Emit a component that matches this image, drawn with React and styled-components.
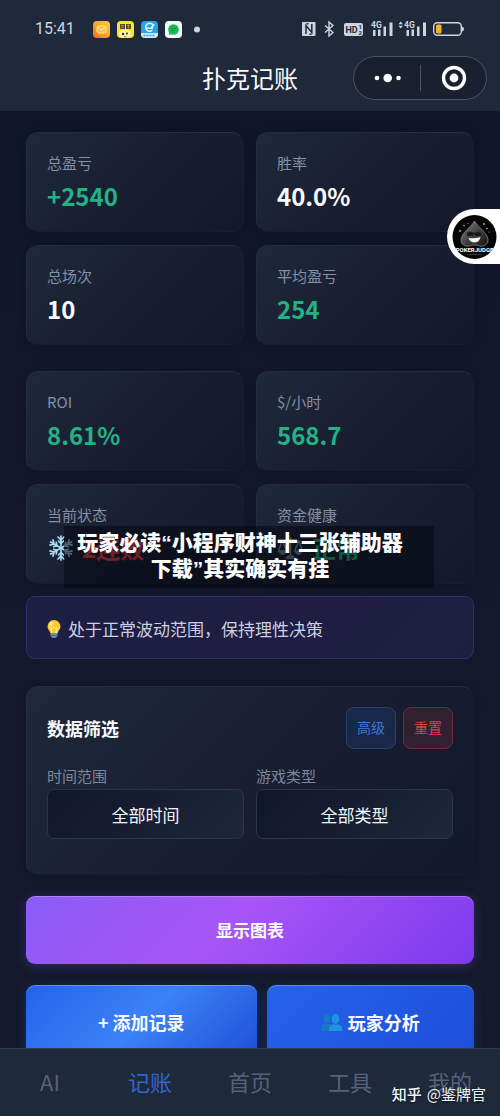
import React from "react"
import styled, { createGlobalStyle } from "styled-components"

const GlobalStyle = createGlobalStyle`
  * {
    box-sizing: border-box;
  }

  body {
    margin: 0;
    background: #11172b;
    color: #f8fafc;
    font-family: "Noto Sans CJK SC", "Noto Sans", sans-serif;
  }

  button,
  select {
    font-family: inherit;
    cursor: pointer;
  }
`

const Screen = styled.div`
  position: relative;
  display: flex;
  flex-direction: column;
  height: 100vh;
  overflow: hidden;
  background: linear-gradient(180deg, #0e152a 0%, #14182e 50%, #141a2c 100%);
`

const Header = styled.header`
  flex: none;
  padding-bottom: 11px;
  background: #1f293a;
`

const StatusBar = styled.div`
  display: flex;
  align-items: center;
  justify-content: space-between;
  height: 56px;
  padding: 2px 36px 0 35px;
  color: #cbd5e1;
`

const StatusGroup = styled.div`
  display: flex;
  align-items: center;
  gap: 7px;
`

const Clock = styled.time`
  margin-right: 11px;
  font-family: Roboto, sans-serif;
  font-size: 16px;
  line-height: 20px;
`

const TitleBar = styled.div`
  display: grid;
  grid-template-columns: 1fr auto 1fr;
  align-items: center;
  padding: 0 13px;
`

const PageTitle = styled.h1`
  grid-column: 2;
  margin: 0;
  font-size: 24px;
  font-weight: 400;
  line-height: 44px;
`

const Capsule = styled.div`
  display: flex;
  align-items: center;
  justify-self: end;
  width: 134px;
  height: 44px;
  border: 1px solid #475569;
  border-radius: 22px;
  background: #1a2030;
`

const CapsuleButton = styled.button`
  display: flex;
  flex: 1;
  align-items: center;
  justify-content: center;
  height: 26px;
  padding: 0 0 0 2px;
  border: 0;
  background: none;
  color: white;

  & + & {
    border-left: 1px solid #475569;
  }
`

const Content = styled.main`
  display: flex;
  flex: 1;
  flex-direction: column;
  min-height: 0;
  padding: 21px 26px;
  overflow-y: auto;
  scrollbar-width: none;
`

const StatGrid = styled.section`
  display: grid;
  flex: none;
  grid-template-columns: 1fr 1fr;
  gap: 13px 12px;
  margin-bottom: ${props => props.space}px;
`

const Panel = styled.div`
  flex: none;
  padding: 20px;
  border: 1px solid #232c40;
  border-right-color: #171d31;
  border-bottom-color: #171d31;
  border-radius: 12px;
  background: linear-gradient(135deg, #1e293b 0%, #191e32 50%, #12182c 100%);
  box-shadow: 0 2px 8px rgba(8, 12, 28, 0.25);
`

const StatCard = styled(Panel)`
  padding: 19px 20px 21px;
`

const StatLabel = styled.div`
  margin-bottom: 8px;
  color: #8490a4;
  font-size: 15px;
  line-height: 22px;
`

const tones = {
  up: "#24b285",
  down: "#ef4444",
  plain: "#f8fafc",
}

const StatValue = styled.div`
  display: flex;
  align-items: center;
  gap: 8px;
  color: ${props => tones[props.tone]};
  font-size: 24px;
  font-weight: 700;
  line-height: 28px;
`

const Tip = styled.p`
  display: flex;
  flex: none;
  align-items: center;
  gap: 6px;
  margin: 0 0 27px;
  padding: 19px 19px 17px;
  border: 1px solid #32306a;
  border-radius: 9px;
  background: linear-gradient(135deg, #1e1d42 0%, #1f1d42 50%, #1e1f40 100%);
  color: #cbd0e0;
  font-size: 17px;
  line-height: 25px;
`

const FilterHead = styled.div`
  display: flex;
  align-items: center;
  gap: 7px;
  margin-bottom: 16px;
`

const FilterTitle = styled.h2`
  flex: 1;
  margin: 0;
  font-size: 18px;
  font-weight: 700;
  line-height: 26px;
`

const SmallButton = styled.button`
  height: 42px;
  padding: 0 10px 2px;
  border: 1px solid ${props => (props.$danger ? "#6a2c3b" : "#27446e")};
  border-radius: 8px;
  background: ${props => (props.$danger ? "#33202f" : "#182848")};
  color: ${props => (props.$danger ? "#d94048" : "#3f78d8")};
  font-size: 14px;
  line-height: 20px;
`

const FilterFields = styled.div`
  display: grid;
  grid-template-columns: 1fr 1fr;
  gap: 12px;
  padding-bottom: 15px;
`

const Field = styled.label`
  display: flex;
  flex-direction: column;
  gap: 2px;
  color: #7c879b;
  font-size: 15px;
  line-height: 22px;
`

const Select = styled.select`
  appearance: none;
  width: 100%;
  height: 50px;
  border: 1px solid #2a3548;
  border-radius: 7px;
  background: linear-gradient(135deg, #10172b 0%, #171e32 50%, #1d2839 100%);
  color: #f1f5f9;
  font-size: 17px;
  text-align: center;
  text-align-last: center;
`

const buttonFills = {
  purple: "linear-gradient(135deg, #8b5cf6 0%, #a855f7 45%, #7c3aed 100%)",
  sky: "linear-gradient(135deg, #2563eb 0%, #3b82f6 50%, #1d4ed8 100%)",
  blue: "linear-gradient(135deg, #2563eb 0%, #1d4ed8 100%)",
}

const BigButton = styled.button`
  display: flex;
  flex: none;
  align-items: center;
  justify-content: center;
  gap: 6px;
  height: 76px;
  padding: 0 0 2px;
  border: 0;
  border-radius: 9px;
  background: ${props => buttonFills[props.$fill]};
  box-shadow: 0 2px 12px #2563eb40, inset 0 1px 0 rgba(255, 255, 255, 0.25);
  color: #f8fafc;
  font-size: 18px;
  font-weight: 700;
`

const ChartButton = styled(BigButton)`
  height: 68px;
  margin-top: 21px;
  box-shadow: 0 2px 12px #8b5cf640, inset 0 1px 0 rgba(255, 255, 255, 0.25);
  font-size: 17px;
`

const ActionRow = styled.div`
  display: grid;
  flex: none;
  grid-template-columns: 10fr 9fr;
  gap: 10px;
  margin-top: 21px;
`

const TabBar = styled.nav`
  display: flex;
  flex: none;
  height: 68px;
  border-top: 1px solid #303b4c;
  background: #1e293a;
`

const Tab = styled.a`
  display: flex;
  flex: 1;
  align-items: center;
  justify-content: center;
  padding-bottom: 3px;
  color: ${props => (props.$active ? "#3563d4" : "#56627a")};
  font-size: 22px;
  text-decoration: none;
`

const FloatingBadge = styled.button`
  position: absolute;
  top: 209px;
  right: 0;
  display: flex;
  align-items: center;
  height: 55px;
  padding: 0 3px 0 5px;
  border: 0;
  border-radius: 28px 0 0 28px;
  background: white;
`

const Banner = styled.div`
  position: absolute;
  top: 526px;
  right: 66px;
  left: 64px;
  padding: 4px 18px 6px 0;
  background: rgba(6, 8, 14, 0.55);
  color: white;
  font-family: "Liberation Sans", "Noto Sans CJK SC", sans-serif;
  font-size: 21px;
  font-weight: 900;
  line-height: 26px;
  text-align: center;
`

const Watermark = styled.div`
  position: absolute;
  right: 14px;
  bottom: 11px;
  display: flex;
  gap: 5px;
  color: #f1f5f9;
  font-size: 15px;
  line-height: 22px;
  text-shadow: 0 1px 2px rgba(0, 0, 0, 0.6);
`

const WatermarkSite = styled.span`
  font-weight: 500;
`

function AppIcons() {
  return (
    <svg width="108" height="17" viewBox="0 0 108 17" aria-hidden="true">
      <defs>
        <linearGradient id="mail" x1="1" y1="0" x2="0" y2="1">
          <stop offset="0" stopColor="#fbd72b" />
          <stop offset="0.5" stopColor="#f7a823" />
          <stop offset="1" stopColor="#ee6a24" />
        </linearGradient>
      </defs>
      <rect width="17" height="17" rx="4" fill="url(#mail)" />
      <rect x="4" y="5" width="9" height="7" rx="1.5" fill="#f8c04a" stroke="#fde9a5" strokeWidth="1" />
      <path d="M5 6.5l3.5 2.8L12 6.5" fill="none" stroke="#fdf1c8" strokeWidth="1" />

      <rect x="24" width="17" height="17" rx="4" fill="#f8e62d" />
      <path d="M27 3h5v5h-5zM33 3h5v5h-5z" fill="#57501a" />
      <path d="M28 4.5h3M28 6.3h3M34 4.5h3M35.5 3.5v4" stroke="#c5b728" strokeWidth="0.6" />
      <ellipse cx="32" cy="13" rx="6" ry="4" fill="#fff6b5" />
      <circle cx="30" cy="13" r="1.2" fill="#332d16" />
      <circle cx="34" cy="12.5" r="1" fill="#332d16" />
      <path d="M31 15.5q1.5 1 2.5-.7" fill="none" stroke="#6a4b20" strokeWidth="0.9" />

      <rect x="48" width="17" height="17" rx="4" fill="#2ba3e2" />
      <path d="M48 12h17v1a4 4 0 0 1-4 4h-9a4 4 0 0 1-4-4z" fill="#cfeaf7" />
      <path d="M50.5 14.5h12" stroke="#3ba2d5" strokeWidth="1.5" strokeDasharray="2 1" />
      <path d="M53.5 7.2h6.5M59.8 3.8a4 4 0 1 0-.5 5.5M58.5 6.5l2.8-3" fill="none" stroke="#eaf8ff" strokeWidth="1.5" />

      <rect x="72" width="17" height="17" rx="4" fill="#f5fbf7" />
      <circle cx="80.5" cy="8.5" r="5.3" fill="#18bd58" />
      <path d="M76 11v3l3-1z" fill="#18bd58" />
      <path d="M78 7.5h5M78 9.5h3.5" stroke="#0c8d40" strokeWidth="1" />
      <circle cx="104" cy="8.5" r="3" fill="#cbd5e1" />
    </svg>
  )
}

function DeviceIcons() {
  return (
    <svg width="162" height="18" viewBox="0 0 162 18" fill="none" aria-hidden="true">
      <rect y="2" width="13.5" height="14" rx="1" fill="#cbd5e1" />
      <path d="M4 14V5.5L9.8 12.5V4M6.5 3.7H4.5M7.500 14.300h2" stroke="#1f293a" strokeWidth="1.5" />
      <path d="M23 5.5l8 7-4 3.5V2l4 3.5-8 7" stroke="#cbd5e1" strokeWidth="1.4" />
      <rect x="42" y="3" width="19" height="13" rx="2" fill="#cbd5e1" />
      <g fill="#1f293a" fontFamily="Roboto, sans-serif" fontWeight="700">
        <text x="43.5" y="13" fontSize="9">HD</text>
        <text x="56.5" y="9" fontSize="6">1</text>
        <text x="56.5" y="15" fontSize="6">2</text>
      </g>
      <g fill="#cbd5e1">
        <text x="69" y="8" fontFamily="Roboto, sans-serif" fontSize="8.500" fontWeight="700">4G</text>
        <path d="M71 10h2.5v6H71zM76 9.5h2.5V16H76zM81.500 6.500H84V16h-2.500zM87.500 2.500h3V16h-3z" />
        <text x="102" y="8" fontFamily="Roboto, sans-serif" fontSize="8.500" fontWeight="700">4G</text>
        <path d="M104.500 10h2.500v6h-2.500zM109.500 9.500h2.500V16h-2.500zM115 6.500h2.500V16H115zM121 2.500h3V16h-3z" />
        <path d="M96.500 4.200L98.700 1.500l2.200 2.700zM96.500 5.700l2.200 2.700 2.200-2.700z" />
        <path d="M160 6.500q2 .5 2 2.500t-2 2.500z" />
      </g>
      <rect x="131.700" y="2.700" width="27.600" height="12.600" rx="3.500" stroke="#cbd5e1" strokeWidth="1.400" />
      <rect x="134" y="4.500" width="5.500" height="9" rx="1.500" fill="#f3b52d" />
    </svg>
  )
}

function MoreIcon() {
  return (
    <svg width="28" height="10" viewBox="0 0 28 10" fill="currentColor" aria-hidden="true">
      <circle cx="3" cy="5" r="2.3" />
      <circle cx="13.7" cy="5" r="4.3" />
      <circle cx="24.5" cy="5" r="2.3" />
    </svg>
  )
}

function TargetIcon() {
  return (
    <svg width="26" height="26" viewBox="0 0 26 26" aria-hidden="true">
      <circle cx="13" cy="13" r="10.5" fill="none" stroke="currentColor" strokeWidth="3.4" />
      <circle cx="13" cy="13" r="4.4" fill="currentColor" />
    </svg>
  )
}

function SpadeLogo() {
  return (
    <svg width="45" height="46" viewBox="0 0 45 46" aria-hidden="true">
      <defs>
        <linearGradient id="spade" x1="0" y1="0" x2="1" y2="1">
          <stop offset="0" stopColor="#858585" />
          <stop offset="0.6" stopColor="#363636" />
          <stop offset="1" stopColor="#151515" />
        </linearGradient>
      </defs>
      <circle cx="22.5" cy="23" r="22" fill="#050505" />
      <path d="M22.5 7c3 6 13.500 12 13.500 19 0 6-7 7.500-11 5h-5c-4 2.500-11 1-11-5 0-7 10.500-13 13.500-19z" fill="url(#spade)" stroke="#888" strokeWidth="0.8" />
      <path d="M14.5 18.500q4-2 7.500 0 4-2 8 0l-.8 4h-6l-1-2-1 2h-6z" fill="#191919" stroke="#555" strokeWidth="0.5" />
      <path d="M16.500 24q6 1 12-1-1 5-5.500 5.500-4.500.3-6.500-4.500z" fill="#f5f5f5" />
      <g fill="#b5b5b5">
        <circle cx="8" cy="17" r="1" />
        <circle cx="12" cy="11.5" r="0.8" />
        <circle cx="16" cy="9.5" r="0.5" />
        <circle cx="32" cy="10" r="0.9" />
        <circle cx="35" cy="14.5" r="0.8" />
        <circle cx="37" cy="18" r="0.6" />
      </g>
      <text x="22.5" y="37.5" textAnchor="middle" fill="#fff" fontFamily="'Liberation Sans Narrow', Roboto, sans-serif" fontSize="6" fontWeight="700">
        POKERJUDGE
      </text>
      <path d="M15 40.500h15" stroke="#555" strokeWidth="0.6" />
    </svg>
  )
}

function SnowflakeIcon() {
  return (
    <svg width="27" height="28" viewBox="-14 -14 27 28" aria-hidden="true">
      <g fill="none" stroke="#a9daf2" strokeWidth="1.7" strokeLinecap="round">
        {[0, 60, 120, 180, 240, 300].map(angle => (
          <path key={angle} d="M0 0V-12M-3-11L0-8L3-11M-2.500-7L0-4.500L2.500-7" transform={`rotate(${angle})`} />
        ))}
      </g>
    </svg>
  )
}

function ScalesIcon() {
  return (
    <svg width="27" height="26" viewBox="0 0 26 26" fill="none" aria-hidden="true">
      <path d="M13 2v19M3 6q5 1 10-1 5 2 10 1M4.500 6L1 16h8L5 6M21.500 6L17 16h8L21.500 6" stroke="#7b99a8" strokeWidth="1.4" />
      <path d="M1 16h8q-1 4-4 4t-4-4zM17 16h8q-1 4-4 4t-4-4zM8 24q1-4 5-4t5 4z" fill="#6b8797" />
    </svg>
  )
}

function BulbIcon() {
  return (
    <svg width="16" height="20" viewBox="0 0 16 20" aria-hidden="true">
      <path d="M8 1a6.500 6.500 0 0 1 6.500 6.500c0 3-2.300 4-3 7h-7c-.7-3-3-4-3-7A6.500 6.500 0 0 1 8 1z" fill="#fcc934" />
      <path d="M6 14L5 8.500l1.500 1L8 8l1.500 1.500 1.500-1L10 14" fill="none" stroke="#fff2a6" strokeWidth="1" />
      <ellipse cx="5" cy="5" rx="1.5" ry="2.5" fill="#ffe88a" transform="rotate(35 5 5)" />
      <path d="M4.500 14.500h7v2.500q-1 2-3.500 2t-3.500-2z" fill="#6c9cab" />
      <path d="M4.500 16.500h7" stroke="#345d72" strokeWidth="0.8" />
    </svg>
  )
}

function PeopleIcon() {
  return (
    <svg width="21" height="18" viewBox="0 0 21 18" aria-hidden="true">
      <g fill="#1779c2">
        <ellipse cx="6" cy="5.5" rx="3.5" ry="4.5" />
        <path d="M0 18v-3q0-4 4-4h4q3 0 3 4v3z" />
      </g>
      <g fill="#1d94e2">
        <ellipse cx="14.5" cy="6" rx="3.8" ry="5" />
        <path d="M8 18v-2q0-4 4-4.500h5q4 .5 4 4.500v2z" />
      </g>
    </svg>
  )
}

function Stat({ label, value, tone = "plain", icon }) {
  return (
    <StatCard>
      <StatLabel>{label}</StatLabel>
      <StatValue tone={tone}>
        {icon}
        {value}
      </StatValue>
    </StatCard>
  )
}

const tabs = ["AI", "记账", "首页", "工具", "我的"]

export default function App() {
  return (
    <Screen>
      <GlobalStyle />
      <Header>
        <StatusBar>
          <StatusGroup>
            <Clock>15:41</Clock>
            <AppIcons />
          </StatusGroup>
          <DeviceIcons />
        </StatusBar>
        <TitleBar>
          <PageTitle>扑克记账</PageTitle>
          <Capsule>
            <CapsuleButton aria-label="更多">
              <MoreIcon />
            </CapsuleButton>
            <CapsuleButton aria-label="关闭">
              <TargetIcon />
            </CapsuleButton>
          </Capsule>
        </TitleBar>
      </Header>

      <Content>
        <StatGrid space={26}>
          <Stat label="总盈亏" value="+2540" tone="up" />
          <Stat label="胜率" value="40.0%" />
          <Stat label="总场次" value="10" />
          <Stat label="平均盈亏" value="254" tone="up" />
        </StatGrid>
        <StatGrid space={12}>
          <Stat label="ROI" value="8.61%" tone="up" />
          <Stat label="$/小时" value="568.7" tone="up" />
          <Stat label="当前状态" value="2连败" tone="down" icon={<SnowflakeIcon />} />
          <Stat label="资金健康" value="正常" tone="up" icon={<ScalesIcon />} />
        </StatGrid>

        <Tip>
          <BulbIcon />
          处于正常波动范围，保持理性决策
        </Tip>

        <Panel as="section">
          <FilterHead>
            <FilterTitle>数据筛选</FilterTitle>
            <SmallButton>高级</SmallButton>
            <SmallButton $danger>重置</SmallButton>
          </FilterHead>
          <FilterFields>
            <Field>
              时间范围
              <Select>
                <option>全部时间</option>
              </Select>
            </Field>
            <Field>
              游戏类型
              <Select>
                <option>全部类型</option>
              </Select>
            </Field>
          </FilterFields>
        </Panel>

        <ChartButton $fill="purple">显示图表</ChartButton>
        <ActionRow>
          <BigButton $fill="sky">+ 添加记录</BigButton>
          <BigButton $fill="blue">
            <PeopleIcon />
            玩家分析
          </BigButton>
        </ActionRow>
      </Content>

      <TabBar>
        {tabs.map(tab => (
          <Tab key={tab} href="#" $active={tab === "记账"}>
            {tab}
          </Tab>
        ))}
      </TabBar>

      <FloatingBadge aria-label="PokerJudge">
        <SpadeLogo />
      </FloatingBadge>
      <Banner>
        玩家必读“小程序财神十三张辅助器
        <br />
        下载”其实确实有挂
      </Banner>
      <Watermark>
        <WatermarkSite>知乎</WatermarkSite>
        <span>@鉴牌官</span>
      </Watermark>
    </Screen>
  )
}
